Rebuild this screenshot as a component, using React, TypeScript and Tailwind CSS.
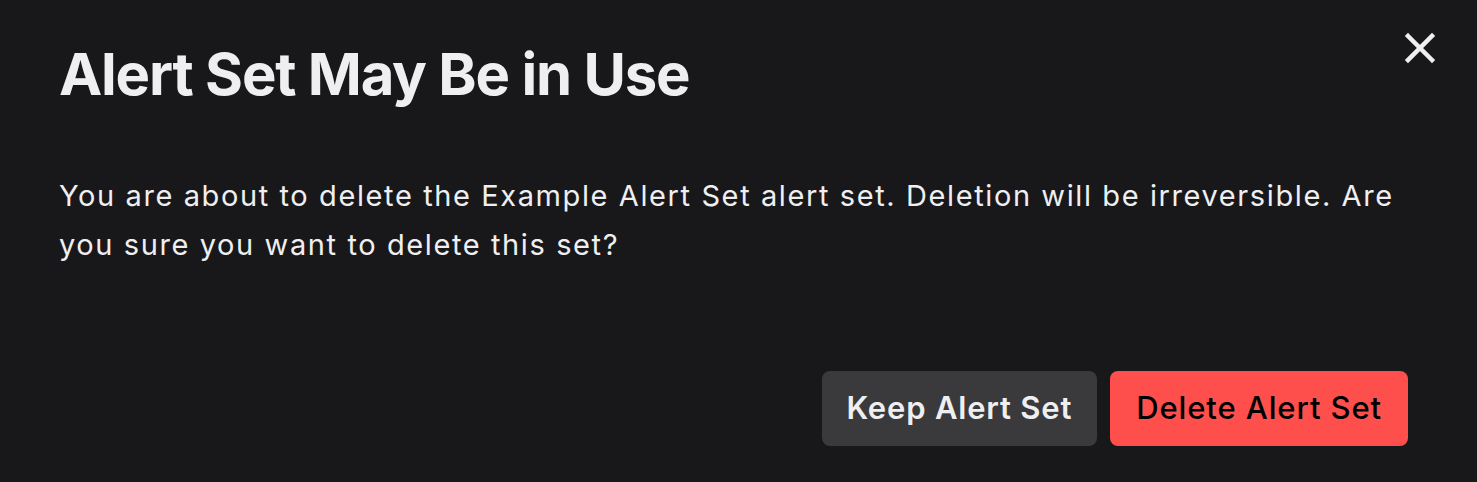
import React from "react";

const CloseIcon = () => (
    <svg width="32" height="32" viewBox="0 0 32 32" fill="none">
        <path d="M4 4L28 28M28 4L4 28" stroke="#efeff1" strokeWidth="4.5" strokeLinecap="square" />
    </svg>
);

const App = () => {
    return (
        <div
            className="relative w-full h-[482px] bg-[#18181b] text-[#efeff1] pl-[59px] pr-[69px]"
            style={{ fontFamily: "Inter, 'Noto Sans', sans-serif" }}
        >
            <button className="absolute top-[32px] right-[41px] p-0 bg-transparent">
                <CloseIcon />
            </button>

            <h1 className="pt-[45px] text-[58px] leading-none font-bold tracking-[-1.2px]">
                Alert Set May Be in Use
            </h1>

            <p className="mt-[68px] text-[29px] leading-[49px] tracking-[1.6px]">
                You are about to delete the Example Alert Set alert set. Deletion will be irreversible. Are you sure you want to delete this set?
            </p>

            <div className="flex justify-end gap-[13px] mt-[102px]">
                <button className="h-[75px] px-[25px] rounded-lg bg-[#3a3a3d] text-[#efeff1] text-[31px] font-semibold tracking-[0.8px]">
                    Keep Alert Set
                </button>
                <button className="h-[75px] px-[26px] rounded-lg bg-[#ff4f4d] text-black text-[31px] font-medium tracking-[0.9px]">
                    Delete Alert Set
                </button>
            </div>
        </div>
    );
};

export default App;
